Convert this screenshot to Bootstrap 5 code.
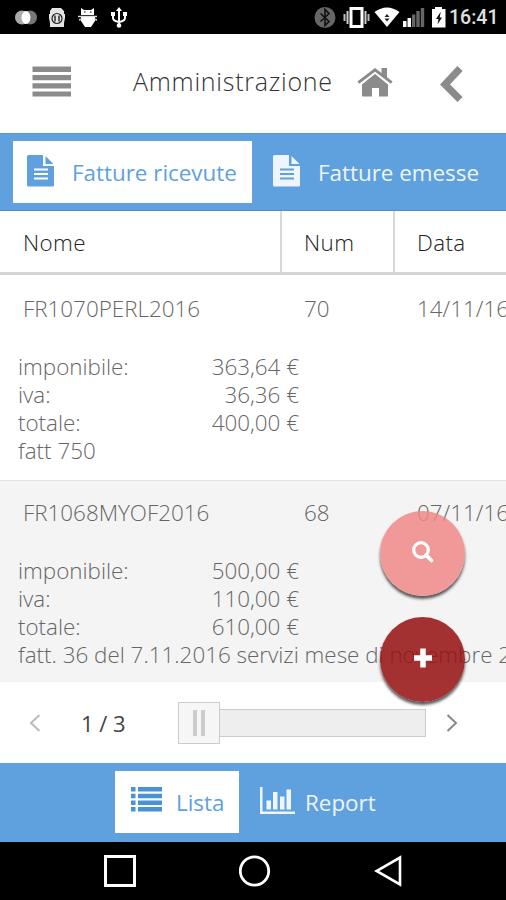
<!DOCTYPE html>
<html lang="it">
<head>
<meta charset="utf-8">
<meta name="viewport" content="width=device-width, initial-scale=1">
<title>Amministrazione</title>
<link href="https://cdn.jsdelivr.net/npm/bootstrap@5.3.0/dist/css/bootstrap.min.css" rel="stylesheet">
<style>
  body { width: 506px; height: 900px; font-family: "Open Sans", "Noto Sans", sans-serif; font-weight: 300; font-size: 22.4px; line-height: 28px; color: #666; background: #fff; }
  svg { display: block; flex: none; }
  .status { height: 34px; background: #000; padding: 0 8px 0 14px; }
  .clock { font: 500 19.500px/34px Roboto, sans-serif; color: #e0e0e0; width: 49px; margin-left: 2px; padding-top: 1px; }
  .topbar { height: 99px; padding: 0 43px 0 32px; }
  .title-text { font-size: 25px; letter-spacing: .75px; line-height: 34px; color: #333; width: 201px; margin: 0 23px 5px 61px; }
  .bar { background: #5ea1de; }
  .bar-top { height: 78px; padding: 7px 0 8px 13px; border-top: 1px solid #5599d9; border-bottom: 1px solid #4a90d2; }
  .bar-bottom { height: 79px; padding: 8px 0 8px 115px; }
  .tab { height: 62px; color: #eef5fc; font-weight: 400; border: 0; border-radius: 0; background: none; font-size: 22.4px; line-height: 28px; }
  .tab-on { background: #fff; color: #5ea1de; }
  .w-ric { width: 239px; padding: 2px 0 0 14px; gap: 17px; }
  .w-eme { padding: 2px 0 0 21px; gap: 17px; }
  .w-lis { width: 124px; padding: 2px 0 0 16px; gap: 14px; }
  .w-rep { padding: 2px 0 0 21px; gap: 10px; }
  .grid-row { display: grid; grid-template-columns: 281px 113px 112px; }
  .heads { height: 64px; border-bottom: 3px solid #d5d5d5; color: #222; letter-spacing: .4px; grid-template-columns: 280px 113px 113px; }
  .heads > div { padding: 18px 0 0 22px; border-left: 2px solid #d8d8d8; }
  .heads > div:first-child { border-left: 0; padding-left: 23px; }
  .rec { overflow: hidden; height: 205px; padding-top: 20px; }
  .rec-alt { background: #f4f4f4; border-top: 1px solid #e3e3e3; height: 202px; padding-top: 18px; margin-bottom: 1px; }
  .rec .grid-row > div { padding-left: 23px; }
  .detail { padding: 30px 0 0 18px; }
  .sum { width: 281px; }
  .pager { height: 80px; padding: 0 48px 0 29px; }
  .page-no { width: 46px; margin: 0 51px 0 40px; font-size: 22px; font-weight: 400; color: #444; }
  .thumb { width: 42px; height: 42px; background: #f6f6f6; border: 1px solid #ccc; gap: 4px; }
  .thumb i { width: 4px; height: 26px; background: #ccc; }
  .track { width: 207px; height: 28px; background: #eee; border: 1px solid #ccc; border-left: 0; margin-right: 20px; }
  .sysnav { height: 58px; background: #000; padding: 0 104px 0 104px; }
  .fab { position: absolute; left: 380px; width: 85px; height: 85px; border-radius: 50%; box-shadow: 0 3px 3px rgba(0,0,0,.65); }
  .fab-find { top: 511px; background: rgba(240,135,135,.85); }
  .fab-add { top: 617px; background: rgba(150,20,20,.87); }
</style>
<script src="https://cdn.jsdelivr.net/npm/bootstrap@5.3.0/dist/js/bootstrap.bundle.min.js"></script>
</head>
<body class="position-relative overflow-hidden m-0">
<div class="d-flex align-items-center status">
  <svg width="116" height="34" viewBox="14 0 116 34">
    <circle cx="22" cy="17.500" r="7" fill="#aaa"/><circle cx="30" cy="17.500" r="7" fill="#777"/><ellipse cx="26" cy="17.500" rx="4.500" ry="6.500" fill="#fff"/>
    <path fill="#e4e4e4" d="M52 8h9l3 3v3h1v4l-1 5v4H50v-4l-1-5v-4h1v-3z"/><circle cx="57" cy="18.500" r="5" fill="none" stroke="#222" stroke-width="1.200"/><path d="M55 15.500v6M59 15.500v6" stroke="#222" stroke-width="1.400"/>
    <path fill="#fff" d="M81 8l3 2h7l3-2v7H81zM81 17h14v4l-4 6h-6l-4-6z"/><path d="M78 16.500h19M79 20l3-1M97 20l-3-1" stroke="#ddd" stroke-width="1.500"/><path d="M84 12h1.500M90 12h1.500" stroke="#000"/>
    <path d="M119 9v17M113 14v4q0 3 6 4q6-1 6-4v-4" fill="none" stroke="#fff" stroke-width="2"/><path d="M116 11l3-4 3 4z" fill="#fff"/><circle cx="119" cy="25.500" r="2.300" fill="#fff"/><path fill="#fff" d="M111 12h4v4h-4zM123 12h4v4h-4z"/>
  </svg>
  <svg class="ms-auto" width="134" height="34" viewBox="313 0 134 34">
    <circle cx="325" cy="17.500" r="10.500" fill="#666"/><path d="M320.500 13.500l8.500 8-4 4v-16l4 4-8.500 8" fill="none" stroke="#111" stroke-width="1.600"/>
    <rect x="351" y="8.500" width="11" height="18" fill="none" stroke="#fff" stroke-width="3"/><path d="M347.500 11v13M365.500 11v13" stroke="#ccc" stroke-width="2"/><path d="M344.500 14v7M368.500 14v7" stroke="#bbb" stroke-width="2"/>
    <path fill="#fff" d="M374.500 12Q387 3 399.500 12L387 27z"/><path d="M384.500 17l2.500-3 2.500 3zM384.500 18.500l2.500 3 2.500-3z" fill="#222"/>
    <path fill="#fff" d="M403 21h3.500v6H403zM407.500 18h3.500v9h-3.500z"/><path fill="#666" d="M412 14.500h3.300V27H412zM416.300 11h3.400v16h-3.400zM420.800 8h3.400v19h-3.400z"/>
    <path fill="#fff" d="M435 7h7v2h3.500v18.500H432V9h3z"/><path fill="#111" d="M440.500 12l-4.500 7h2.500l-1 5.500 4.500-7h-2.300l1-5.500z"/>
  </svg>
  <div class="clock">16:41</div>
</div>
<div class="d-flex align-items-center topbar">
  <svg width="40" height="34" viewBox="0 0 40 34" class="mb-1"><path fill="#8b8b8b" d="M.5 1.500H39V7H.5zM.5 10H39v5.200H.5zM.5 18.300H39v5.200H.5zM.5 26.500H39v5H.5z"/></svg>
  <div class="title-text text-nowrap">Amministrazione</div>
  <svg width="36" height="32" viewBox="0 0 36 32"><path fill="#8b8b8b" d="M5 16.500L18 5.700l13 10.800v11.300q0 .7-.7.700H22V20h-7v8.500H5.700q-.7 0-.7-.7z"/><path fill="none" stroke="#fff" stroke-width="1.600" d="M2.500 16.800L18 4.600l15.500 12.200"/><path fill="none" stroke="#8b8b8b" stroke-width="2.900" d="M1.300 14.700L18 1.800l16.700 12.900"/><path fill="#8b8b8b" d="M24.500 0H30v10.500l-5.500-4z"/></svg>
  <svg class="ms-auto" width="23" height="36" viewBox="0 0 23 36"><path fill="none" stroke="#8b8b8b" stroke-width="7.200" d="M20 2.500L5 18.500l15 15"/></svg>
</div>
<nav class="d-flex bar bar-top">
  <button class="d-flex align-items-center tab tab-on w-ric"><svg class="mb-1" width="28" height="32" viewBox="0 0 28 32"><path fill="currentColor" d="M1.500 0H16v11h11v19q0 1.500-1.500 1.500h-24Q0 31.500 0 30V1.500Q0 0 1.500 0z"/><path fill="currentColor" d="M18.500 1l8 8h-8z"/><path d="M7 14.500h14M7 19h14M7 23.500h14" stroke="#fff" stroke-width="2.200"/></svg><span class="text-nowrap">Fatture ricevute</span></button>
  <button class="d-flex align-items-center tab w-eme"><svg class="mb-1" width="28" height="32" viewBox="0 0 28 32"><path fill="currentColor" d="M1.500 0H16v11h11v19q0 1.500-1.500 1.500h-24Q0 31.500 0 30V1.500Q0 0 1.500 0z"/><path fill="currentColor" d="M18.500 1l8 8h-8z"/><path d="M7 14.500h14M7 19h14M7 23.500h14" stroke="#5ea1de" stroke-width="2.200"/></svg><span class="text-nowrap">Fatture emesse</span></button>
</nav>
<div class="grid-row heads"><div>Nome</div><div>Num</div><div>Data</div></div>
<div class="rec">
  <div class="grid-row text-nowrap"><div>FR1070PERL2016</div><div>70</div><div>14/11/16</div></div>
  <div class="detail text-nowrap">
    <div class="d-flex justify-content-between sum"><span>imponibile:</span><span>363,64 €</span></div>
    <div class="d-flex justify-content-between sum"><span>iva:</span><span>36,36 €</span></div>
    <div class="d-flex justify-content-between sum"><span>totale:</span><span>400,00 €</span></div>
    <div>fatt 750</div>
  </div>
</div>
<div class="rec rec-alt">
  <div class="grid-row text-nowrap"><div>FR1068MYOF2016</div><div>68</div><div>07/11/16</div></div>
  <div class="detail text-nowrap">
    <div class="d-flex justify-content-between sum"><span>imponibile:</span><span>500,00 €</span></div>
    <div class="d-flex justify-content-between sum"><span>iva:</span><span>110,00 €</span></div>
    <div class="d-flex justify-content-between sum"><span>totale:</span><span>610,00 €</span></div>
    <div>fatt. 36 del 7.11.2016 servizi mese di novembre 2016</div>
  </div>
</div>
<div class="d-flex align-items-center pager">
  <svg width="12" height="18" viewBox="0 0 12 18"><path d="M10.500 1L2 9l8.500 8" fill="none" stroke="#bbb" stroke-width="2"/></svg>
  <div class="page-no text-nowrap">1 / 3</div>
  <div class="d-flex align-items-center justify-content-center thumb"><i></i><i></i></div>
  <div class="track"></div>
  <svg width="12" height="18" viewBox="0 0 12 18"><path d="M1.500 1L10 9l-8.500 8" fill="none" stroke="#888" stroke-width="2"/></svg>
</div>
<nav class="d-flex bar bar-bottom">
  <button class="d-flex align-items-center tab tab-on w-lis"><svg class="mb-2" width="31" height="25" viewBox="0 0 31 25"><path fill="#4a92d6" d="M0 0h4.500v4.500H0zM7 0h24v4.500H7zM0 6.700h4.500v4.500H0zM7 6.700h24v4.500H7zM0 13.400h4.500v4.500H0zM7 13.400h24v4.500H7zM0 20h4.500v4.500H0zM7 20h24v4.500H7z"/></svg><span>Lista</span></button>
  <button class="d-flex align-items-center tab w-rep"><svg class="mb-1" width="35" height="28" viewBox="0 0 35 28"><path fill="currentColor" d="M0 0h2.500v24.500H35V27H0zM6.500 13.500H11v9H6.500zM13 5h4.500v17.500H13zM20 9.500h4.500v13H20zM26.500 2.500H31v20h-4.500z"/></svg><span>Report</span></button>
</nav>
<div class="d-flex align-items-center justify-content-between sysnav">
  <svg width="32" height="32" viewBox="0 0 32 32"><rect x="1.500" y="1.500" width="29" height="29" fill="none" stroke="#fff" stroke-width="3"/></svg>
  <svg width="32" height="32" viewBox="0 0 32 32"><circle cx="15.500" cy="16" r="14.200" fill="none" stroke="#fff" stroke-width="2.800"/></svg>
  <svg width="28" height="32" viewBox="0 0 28 32"><path d="M26 2.500v27L2.500 16z" fill="none" stroke="#fff" stroke-width="2.600"/></svg>
</div>
<button class="fab fab-find d-flex align-items-center justify-content-center border-0 p-0 pb-1" aria-label="Cerca"><svg width="22" height="22" viewBox="0 0 22 22"><circle cx="9" cy="9" r="7.300" fill="none" stroke="#fff" stroke-width="3.200"/><path d="M14 14l5.500 5.500" stroke="#fff" stroke-width="3.800" stroke-linecap="round"/></svg></button>
<button class="fab fab-add d-flex align-items-center justify-content-center border-0 p-0 pb-1" aria-label="Aggiungi"><svg width="18" height="20" viewBox="0 0 18 20"><path d="M9 .5v19M0 10h18" stroke="#fff" stroke-width="5.500"/></svg></button>
</body>
</html>
